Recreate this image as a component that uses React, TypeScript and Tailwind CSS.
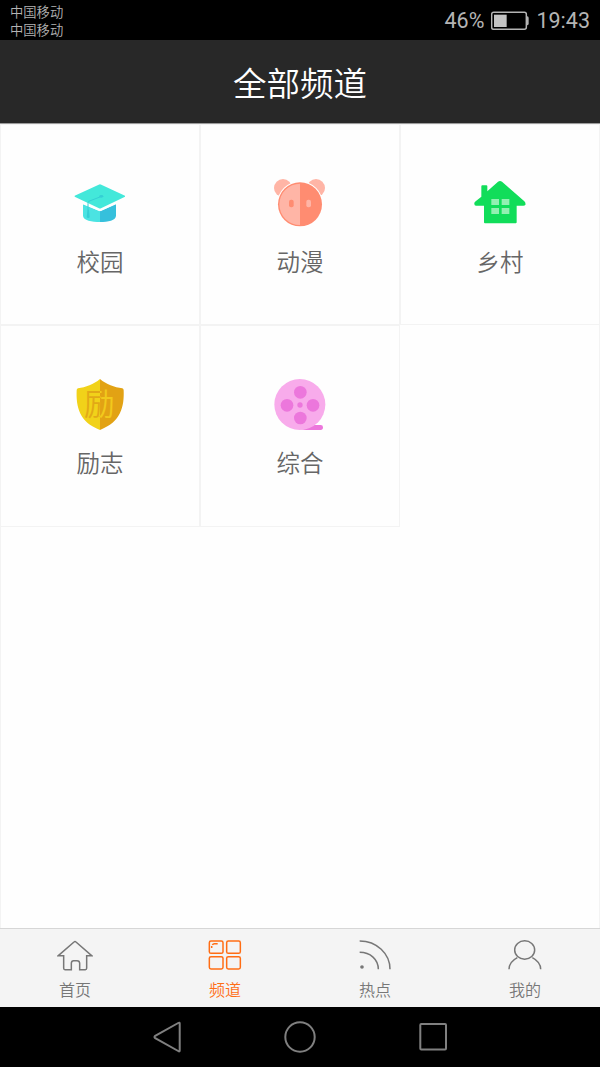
import React, { useState } from "react";

interface ChannelType {
  id: number;
  name: string;
  icon: React.ReactNode;
}
interface TabType {
  id: number;
  name: string;
  icon: React.ReactNode;
}

const channels: ChannelType[] = [
  {
    id: 1,
    name: "校园",
    icon: (
      <svg viewBox="42 39 156 156" className="h-[52px] w-[52px]">
        <path d="M69 118L120 139V171C96 171 69 166 69 152Z" fill="#4be3e2" />
        <path d="M120 139L168 118V152C168 166 144 171 120 171Z" fill="#36c0dc" />
        <path
          d="M44 92L116 59Q120 57 124 59L195 92V95L123 130Q120 131 117 130L44 95Z"
          fill="#43e8da"
        />
        <path
          d="M69 115L117 135Q120 136 123 135L168 114"
          fill="none"
          stroke="#fff"
          strokeWidth="5"
        />
        <path
          d="M125 94L86 109Q84 111 84 116V158"
          fill="none"
          stroke="#35cfd5"
          strokeWidth="3"
        />
        <ellipse cx="124" cy="94" rx="6" ry="4" fill="#35cfd5" />
        <path d="M83 134H87L89 157Q85 161 80 157Z" fill="#35cfd5" />
      </svg>
    ),
  },
  {
    id: 2,
    name: "动漫",
    icon: (
      <svg viewBox="42 39 156 156" className="h-[52px] w-[52px]">
        <circle cx="69" cy="69" r="27" fill="#ffb5a6" />
        <circle cx="168" cy="69" r="27" fill="#ffb5a6" />
        <circle cx="120" cy="118" r="69" fill="#fff" />
        <circle cx="120" cy="118" r="66" fill="#ff8c71" />
        <path d="M120 56A62 62 0 0 0 120 180Z" fill="#ffb5a6" />
        <rect x="87" y="104" width="14" height="23" rx="6" fill="#ff8c71" />
        <rect x="139" y="104" width="14" height="23" rx="6" fill="#ffb5a6" />
      </svg>
    ),
  },
  {
    id: 3,
    name: "乡村",
    icon: (
      <svg viewBox="42 39 156 156" className="h-[52px] w-[52px]">
        <path
          d="M64 95V64Q64 61 67 61H79Q82 61 82 64V79L114 50Q120 46 126 50L193 109Q198 114 196 120Q194 122 190 122H170V172Q170 175 167 175H75Q72 175 72 172V122H48Q43 122 43 117Q42 113 47 109Z"
          fill="#11dd5a"
        />
        <path
          d="M94 102H117V120H94ZM125 102H148V120H125ZM94 129H117V147H94ZM125 129H148V147H125Z"
          fill="#92f0b2"
        />
      </svg>
    ),
  },
  {
    id: 4,
    name: "励志",
    icon: (
      <svg viewBox="42 42 156 156" className="h-[52px] w-[52px]">
        <defs>
          <linearGradient id="shieldText" gradientUnits="userSpaceOnUse" x1="119" x2="121" y1="0" y2="0">
            <stop offset="0.5" stopColor="#e2a916" />
            <stop offset="0.5" stopColor="#f1c91c" />
          </linearGradient>
        </defs>
        <path
          d="M120 42C101 58 77 67 54 70Q50 71 50 76C48 125 57 171 120 195Z"
          fill="#f1d219"
        />
        <path
          d="M120 42C139 58 163 67 187 70Q191 71 191 76C193 125 183 171 120 195Z"
          fill="#e2a214"
        />
        <text x="72" y="150" fontSize="92" fontWeight="350" fill="url(#shieldText)">
          励
        </text>
      </svg>
    ),
  },
  {
    id: 5,
    name: "综合",
    icon: (
      <svg viewBox="42 42 156 156" className="h-[52px] w-[52px]">
        <path
          d="M120 195Q145 192 154 180H182Q189 180 189 187Q189 195 182 195Z"
          fill="#ec77dc"
        />
        <circle cx="119.5" cy="118.5" r="76.5" fill="#f8abeb" />
        <g fill="#ec77dc">
          <circle cx="121" cy="82" r="19" />
          <circle cx="81" cy="121" r="19" />
          <circle cx="159" cy="121" r="19" />
          <circle cx="121" cy="159" r="19" />
          <circle cx="120" cy="120" r="8" />
        </g>
      </svg>
    ),
  },
];

const tabs: TabType[] = [
  {
    id: 1,
    name: "首页",
    icon: (
      <path d="M175 107L222 66Q225 63 228 66L275 107H260V145Q260 149 256 149H239V130Q239 122 231 122H221Q214 122 214 130V149H195Q191 149 191 145V107Z" />
    ),
  },
  {
    id: 2,
    name: "频道",
    icon: (
      <>
        <rect x="628" y="63" width="41" height="37" rx="5" />
        <rect x="680" y="63" width="41" height="37" rx="5" />
        <rect x="628" y="110" width="41" height="37" rx="5" />
        <rect x="680" y="110" width="41" height="37" rx="5" />
        <path d="M635 84V78M637 75Q639 71 643 71H653" />
      </>
    ),
  },
  {
    id: 3,
    name: "热点",
    icon: (
      <>
        <path d="M179 63C230 63 270 101 270 148M179 97C211 97 235 118 235 148" />
        <circle cx="186" cy="141" r="5.5" fill="currentColor" stroke="none" />
      </>
    ),
  },
  {
    id: 4,
    name: "我的",
    icon: (
      <>
        <ellipse cx="674" cy="90" rx="30" ry="27.5" />
        <path d="M627 148Q627 126 652 113M697 113Q722 126 722 148" />
      </>
    ),
  },
];

function StatusBar() {
  return (
    <div className="flex h-10 items-center justify-between bg-black px-2.5 text-[#b4b4b4]">
      <div className="pt-px text-[13.3px] font-[350] leading-[18px]">
        <div>中国移动</div>
        <div>中国移动</div>
      </div>
      <div className="flex items-center pt-0.5 font-[Roboto,sans-serif] text-[21.5px] leading-10">
        <span>46%</span>
        <svg viewBox="183 33 114 60" className="ml-[7px] mr-[7px] h-5 w-[38px]">
          <rect
            x="185"
            y="37"
            width="104"
            height="51"
            rx="6"
            fill="none"
            stroke="currentColor"
            strokeWidth="4.5"
          />
          <rect x="192" y="44" width="38" height="37" fill="#c4c4c4" />
          <path d="M289 49H292Q296 50 296 54V71Q296 75 292 76H289Z" fill="currentColor" />
        </svg>
        <span>19:43</span>
      </div>
    </div>
  );
}

function NavigationBar() {
  return (
    <div className="flex h-[60px] items-center justify-center gap-[97px] bg-black">
      <svg viewBox="0 0 36 36" className="h-9 w-9" fill="none" stroke="#808080" strokeWidth="2">
        <path d="M30.7 4.5V31.5Q30.7 33 29.2 32L6.2 19.2Q4.7 18 6.2 16.8L29.2 4Q30.7 3.2 30.7 4.5Z" />
      </svg>
      <svg viewBox="0 0 36 36" className="h-9 w-9" fill="none" stroke="#808080" strokeWidth="2">
        <circle cx="18" cy="18" r="14.7" />
      </svg>
      <svg viewBox="0 0 36 36" className="h-9 w-9" fill="none" stroke="#808080" strokeWidth="2">
        <rect x="5.3" y="5" width="25.7" height="25.5" rx="1" />
      </svg>
    </div>
  );
}

function App() {
  const [active, setActive] = useState<number>(2);

  return (
    <div className="flex h-[1067px] w-[600px] flex-col overflow-hidden bg-[#fefefe] font-['Noto_Sans_CJK_SC',sans-serif]">
      <StatusBar />
      <div className="flex h-[84px] items-center justify-center border-b border-[#9b9b9b] bg-[#282828] pt-0.5 text-[33.5px] font-[350] text-white">
        全部频道
      </div>

      <div className="flex-1 border-x border-[#f3f3f3]">
        <div className="-mx-px grid grid-cols-3 grid-rows-[201px_202px]">
          {channels.map((channel) => (
            <div
              key={channel.id}
              className="flex flex-col items-center border border-[#f3f3f3] pt-[53px]"
            >
              {channel.icon}
              <span className="mt-[13px] text-[23.5px] font-[350] leading-9 text-[#666]">
                {channel.name}
              </span>
            </div>
          ))}
        </div>
      </div>

      <div className="grid h-[79px] grid-cols-4 border-t border-[#d6d6d6] bg-[#f4f4f4]">
        {tabs.map((tab, index) => (
          <button
            key={tab.id}
            onClick={() => setActive(tab.id)}
            className={
              "flex flex-col items-center pt-2.5 " +
              (tab.id == active ? "text-[#ff6d14]" : "text-[#777]")
            }
          >
            <svg
              viewBox={index % 2 == 0 ? "171 57 108 96" : "621 57 108 96"}
              className="h-8 w-9"
              fill="none"
              stroke="currentColor"
              strokeWidth="4.5"
            >
              {tab.icon}
            </svg>
            <span className="mt-1.5 text-base font-[350] leading-6">{tab.name}</span>
          </button>
        ))}
      </div>
      <NavigationBar />
    </div>
  );
}

export default App;
